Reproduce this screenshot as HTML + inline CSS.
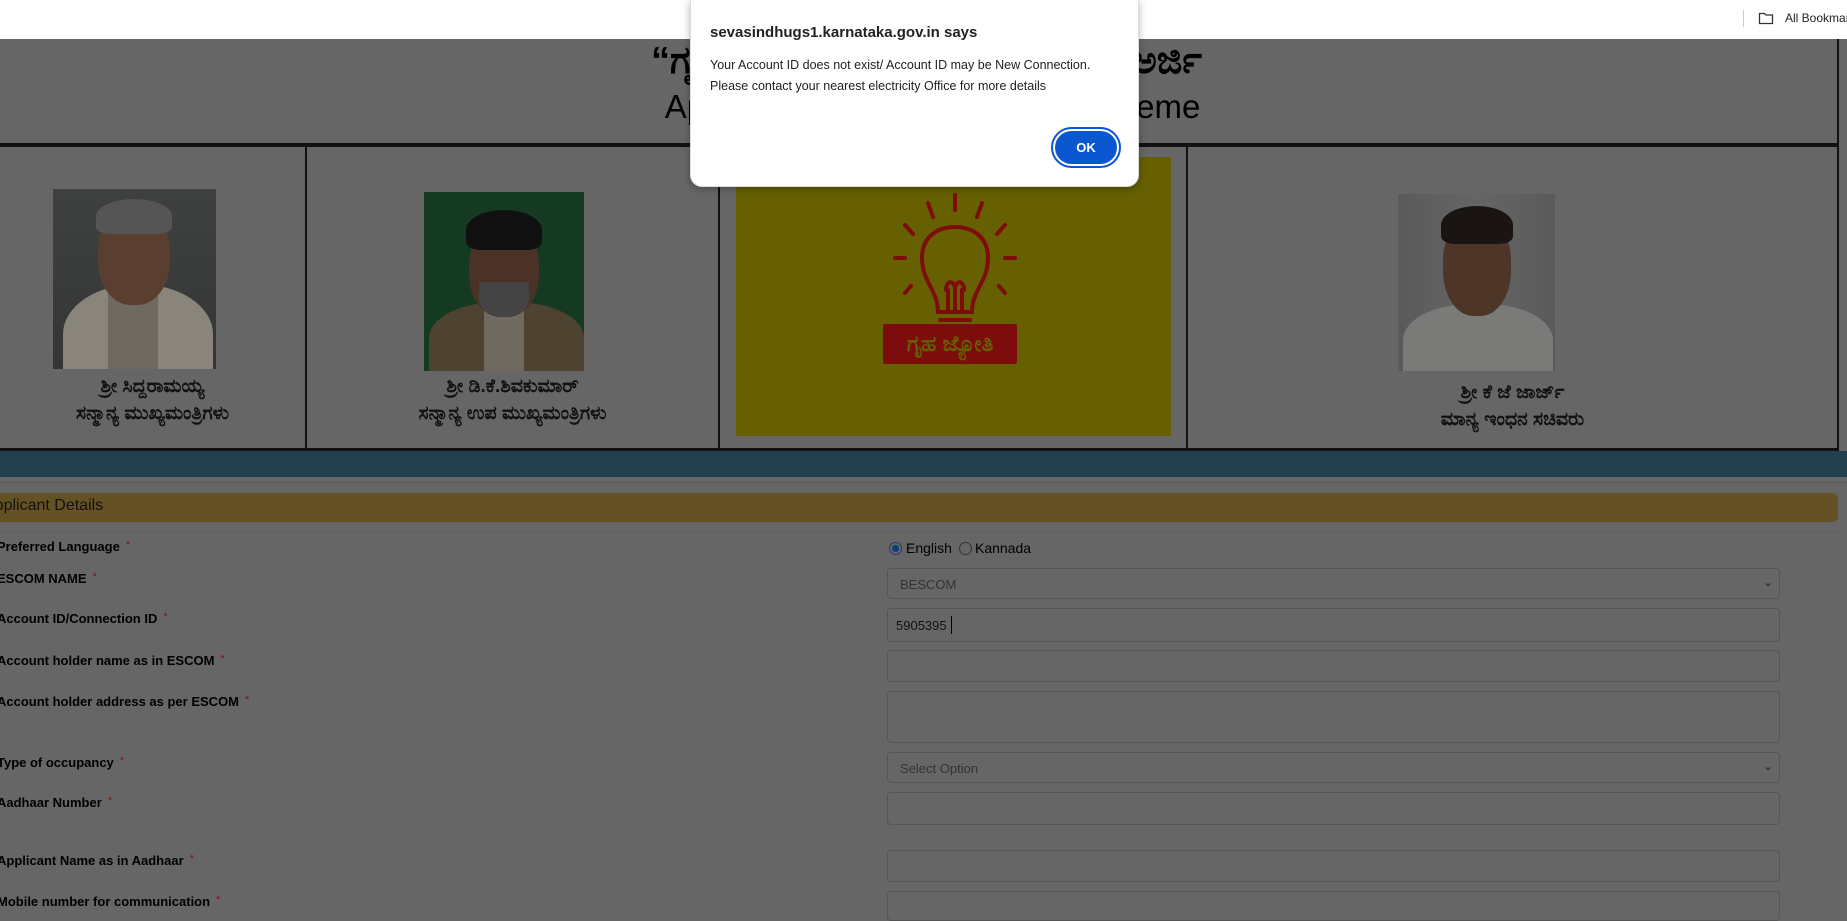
<!DOCTYPE html>
<html><head><meta charset="utf-8">
<style>
*{margin:0;padding:0;box-sizing:border-box}
body{width:1847px;height:909px;overflow:hidden;background:#666;font-family:"Liberation Sans",Arial,sans-serif;position:relative}
.abs{position:absolute}
.topbar{left:0;top:0;width:1847px;height:39px;background:#fff}
.hdr{left:0;top:39px;width:1839px;height:106px;border-right:2px solid #111;border-bottom:2px solid #111}
.h1{top:40px;font-size:38px;font-weight:bold;color:#000;font-family:"Liberation Sans","Noto Sans CJK SC",sans-serif;white-space:nowrap}
.h2{left:10px;width:1845px;text-align:center;top:88px;font-size:33px;color:#000;white-space:nowrap}
.vl{width:2px;background:#111;top:145px;height:306px}
.cap{text-align:center;font-weight:bold;font-size:19px;color:#111;line-height:27px;font-family:"Liberation Sans","Noto Sans CJK SC",sans-serif}
.lbl{left:-3px;font-size:13px;font-weight:bold;color:#000}
.lbl i{color:#8a1010;font-style:normal;font-weight:normal;margin-left:6px;font-size:11px;vertical-align:top}
.inp{left:887px;width:893px;border:1px solid #555;border-radius:4px;background:#666}
.txt{font-size:13px;color:#333}
</style></head><body>
<div class="abs topbar"></div>
<div class="abs" style="left:1743px;top:10px;width:1px;height:17px;background:#ccc"></div>
<svg class="abs" style="left:1758px;top:11px" width="16" height="14" viewBox="0 0 16 14"><path d="M1.5 2.5h5l1.5 1.5h6.5v8.5h-13z" fill="none" stroke="#333" stroke-width="1.3"/></svg>
<div class="abs" style="left:1785px;top:11px;font-size:12px;color:#222;white-space:nowrap">All Bookmarks</div>

<div class="abs hdr"></div>
<div class="abs h1" style="left:651px">“ಗೃಹ ಜ್ಯೋತಿ”</div>
<div class="abs h1" style="right:645px">ಯೋಜನೆಗೆ ಅರ್ಜಿ</div>
<div class="abs h2">Application for Gruha Jyothi Scheme</div>

<div class="abs" style="left:0;top:144px;width:1839px;height:3px;background:#111"></div>
<div class="abs vl" style="left:305px"></div>
<div class="abs vl" style="left:718px"></div>
<div class="abs vl" style="left:1186px"></div>
<div class="abs vl" style="left:1837px"></div>
<div class="abs" style="left:0;top:448px;width:1839px;height:3px;background:#111"></div>

<!-- photo 1 -->
<div class="abs" style="left:53px;top:189px;width:163px;height:180px;background:linear-gradient(#3f4141,#343636);overflow:hidden">
 <div class="abs" style="left:10px;top:95px;width:150px;height:100px;background:#8a857a;border-radius:50% 50% 0 0"></div>
 <div class="abs" style="left:55px;top:100px;width:50px;height:80px;background:#6f6a60"></div>
 <div class="abs" style="left:45px;top:18px;width:72px;height:98px;background:#5a3f30;border-radius:45%"></div>
 <div class="abs" style="left:43px;top:10px;width:76px;height:35px;background:#555;border-radius:50% 50% 20% 20%"></div>
</div>
<div class="abs cap" style="left:0;width:305px;top:373px">ಶ್ರೀ ಸಿದ್ದರಾಮಯ್ಯ<br>ಸನ್ಮಾನ್ಯ ಮುಖ್ಯಮಂತ್ರಿಗಳು</div>

<!-- photo 2 -->
<div class="abs" style="left:424px;top:192px;width:160px;height:179px;background:#143a22;overflow:hidden">
 <div class="abs" style="left:5px;top:110px;width:155px;height:80px;background:#4e4230;border-radius:45% 45% 0 0"></div>
 <div class="abs" style="left:60px;top:110px;width:40px;height:70px;background:#6e6a60"></div>
 <div class="abs" style="left:45px;top:30px;width:70px;height:95px;background:#4a3326;border-radius:45%"></div>
 <div class="abs" style="left:42px;top:18px;width:76px;height:40px;background:#111;border-radius:50% 50% 20% 20%"></div>
 <div class="abs" style="left:55px;top:90px;width:50px;height:35px;background:#444;border-radius:0 0 50% 50%"></div>
</div>
<div class="abs cap" style="left:307px;width:411px;top:373px">ಶ್ರೀ ಡಿ.ಕೆ.ಶಿವಕುಮಾರ್<br>ಸನ್ಮಾನ್ಯ ಉಪ ಮುಖ್ಯಮಂತ್ರಿಗಳು</div>

<!-- logo -->
<div class="abs" style="left:736px;top:157px;width:435px;height:279px;background:#666000"></div>
<svg class="abs" style="left:880px;top:190px" width="150" height="180" viewBox="0 0 150 180">
 <g stroke="#7d0c0c" stroke-width="4" fill="none" stroke-linecap="round">
  <line x1="75" y1="5" x2="75" y2="20"/><line x1="48" y1="13" x2="53" y2="27"/><line x1="102" y1="13" x2="97" y2="27"/>
  <line x1="25" y1="35" x2="33" y2="44"/><line x1="125" y1="35" x2="117" y2="44"/>
  <line x1="15" y1="68" x2="25" y2="68"/><line x1="125" y1="68" x2="135" y2="68"/>
  <line x1="25" y1="103" x2="31" y2="96"/><line x1="125" y1="103" x2="119" y2="96"/>
  <path d="M58 122 C58 100 42 92 42 68 C42 48 56 37 75 37 C94 37 108 48 108 68 C108 92 92 100 92 122 Z"/>
  <path d="M68 120 V100 M75 120 V98 M82 120 V100 M66 100 C66 90 74 90 75 98 C76 90 84 90 84 100"/>
  <line x1="60" y1="130" x2="90" y2="130"/><line x1="62" y1="138" x2="88" y2="138"/>
 </g>
</svg>
<div class="abs" style="left:883px;top:324px;width:134px;height:40px;background:#7d0c0c;border-radius:2px;color:#666000;font-weight:bold;font-size:22px;text-align:center;line-height:40px;font-family:'Liberation Sans','Noto Sans CJK SC',sans-serif">ಗೃಹ ಜ್ಯೋತಿ</div>

<!-- photo 4 -->
<div class="abs" style="left:1398px;top:194px;width:157px;height:177px;background:linear-gradient(90deg,#5a5a5a,#656565,#5a5a5a);overflow:hidden">
 <div class="abs" style="left:5px;top:110px;width:150px;height:80px;background:#7a7a78;border-radius:45% 45% 0 0"></div>
 <div class="abs" style="left:45px;top:22px;width:68px;height:100px;background:#4d3628;border-radius:45%"></div>
 <div class="abs" style="left:43px;top:12px;width:72px;height:38px;background:#1a1412;border-radius:50% 50% 20% 20%"></div>
</div>
<div class="abs cap" style="left:1188px;width:649px;top:379px">ಶ್ರೀ ಕೆ ಜೆ ಜಾರ್ಜ್<br>ಮಾನ್ಯ ಇಂಧನ ಸಚಿವರು</div>

<!-- band -->
<div class="abs" style="left:0;top:451px;width:1847px;height:26px;background:#233f4e"></div>
<div class="abs" style="left:0;top:482px;width:1847px;height:1px;background:#5a5a5a"></div>
<div class="abs" style="left:0;top:493px;width:1838px;height:29px;background:#655224;border-radius:0 5px 5px 0"></div>
<div class="abs" style="left:-16px;top:497px;font-size:16px;color:#111">Applicant Details</div>
<div class="abs" style="left:0;top:531px;width:1838px;border-top:1px dashed #5c5c5c"></div>

<div class="abs lbl" style="top:539px">Preferred Language<i>*</i></div>
<div class="abs lbl" style="top:571px">ESCOM NAME<i>*</i></div>
<div class="abs lbl" style="top:611px">Account ID/Connection ID<i>*</i></div>
<div class="abs lbl" style="top:653px">Account holder name as in ESCOM<i>*</i></div>
<div class="abs lbl" style="top:694px">Account holder address as per ESCOM<i>*</i></div>
<div class="abs lbl" style="top:755px">Type of occupancy<i>*</i></div>
<div class="abs lbl" style="top:795px">Aadhaar Number<i>*</i></div>
<div class="abs lbl" style="top:853px">Applicant Name as in Aadhaar<i>*</i></div>
<div class="abs lbl" style="top:894px">Mobile number for communication<i>*</i></div>

<div class="abs" style="left:889px;top:542px;width:13px;height:13px;border-radius:50%;border:1px solid #1f3c66;background:#666;"><div style="margin:2px;width:7px;height:7px;border-radius:50%;background:#0b3d7a"></div></div>
<div class="abs" style="left:906px;top:540px;font-size:14px;color:#000">English</div>
<div class="abs" style="left:959px;top:542px;width:13px;height:13px;border-radius:50%;border:1px solid #333"></div>
<div class="abs" style="left:975px;top:540px;font-size:14px;color:#000">Kannada</div>

<div class="abs inp" style="top:568px;height:31px"><span class="abs txt" style="left:12px;top:8px">BESCOM</span><span class="abs" style="right:6px;top:6px;font-size:12px;color:#222">&#8964;</span></div>
<div class="abs inp" style="top:608px;height:34px"><span class="abs" style="left:8px;top:9px;font-size:13px;color:#111">5905395</span><span class="abs" style="left:63px;top:7px;width:1px;height:18px;background:#000"></span></div>
<div class="abs inp" style="top:650px;height:32px"></div>
<div class="abs inp" style="top:691px;height:52px"></div>
<div class="abs inp" style="top:752px;height:31px"><span class="abs txt" style="left:12px;top:8px">Select Option</span><span class="abs" style="right:6px;top:6px;font-size:12px;color:#222">&#8964;</span></div>
<div class="abs inp" style="top:792px;height:33px"></div>
<div class="abs inp" style="top:850px;height:32px"></div>
<div class="abs inp" style="top:891px;height:30px"></div>

<!-- dialog -->
<div class="abs" style="left:690px;top:0;width:449px;height:187px;background:#fff;border-radius:0 0 12px 12px;box-shadow:0 2px 8px rgba(0,0,0,.3);border:1px solid #ddd;border-top:none"></div>
<div class="abs" style="left:710px;top:24px;font-size:15px;font-weight:bold;color:#222">sevasindhugs1.karnataka.gov.in says</div>
<div class="abs" style="left:710px;top:55px;font-size:12.5px;color:#222;line-height:21px">Your Account ID does not exist/ Account ID may be New Connection.<br>Please contact your nearest electricity Office for more details</div>
<div class="abs" style="left:1051px;top:127px;width:70px;height:41px;border-radius:21px;border:2px solid #0b57d0;padding:2px"><div style="width:100%;height:100%;border-radius:18px;background:#0b57d0;color:#fff;font-weight:bold;font-size:13px;text-align:center;line-height:33px">OK</div></div>
</body></html>
